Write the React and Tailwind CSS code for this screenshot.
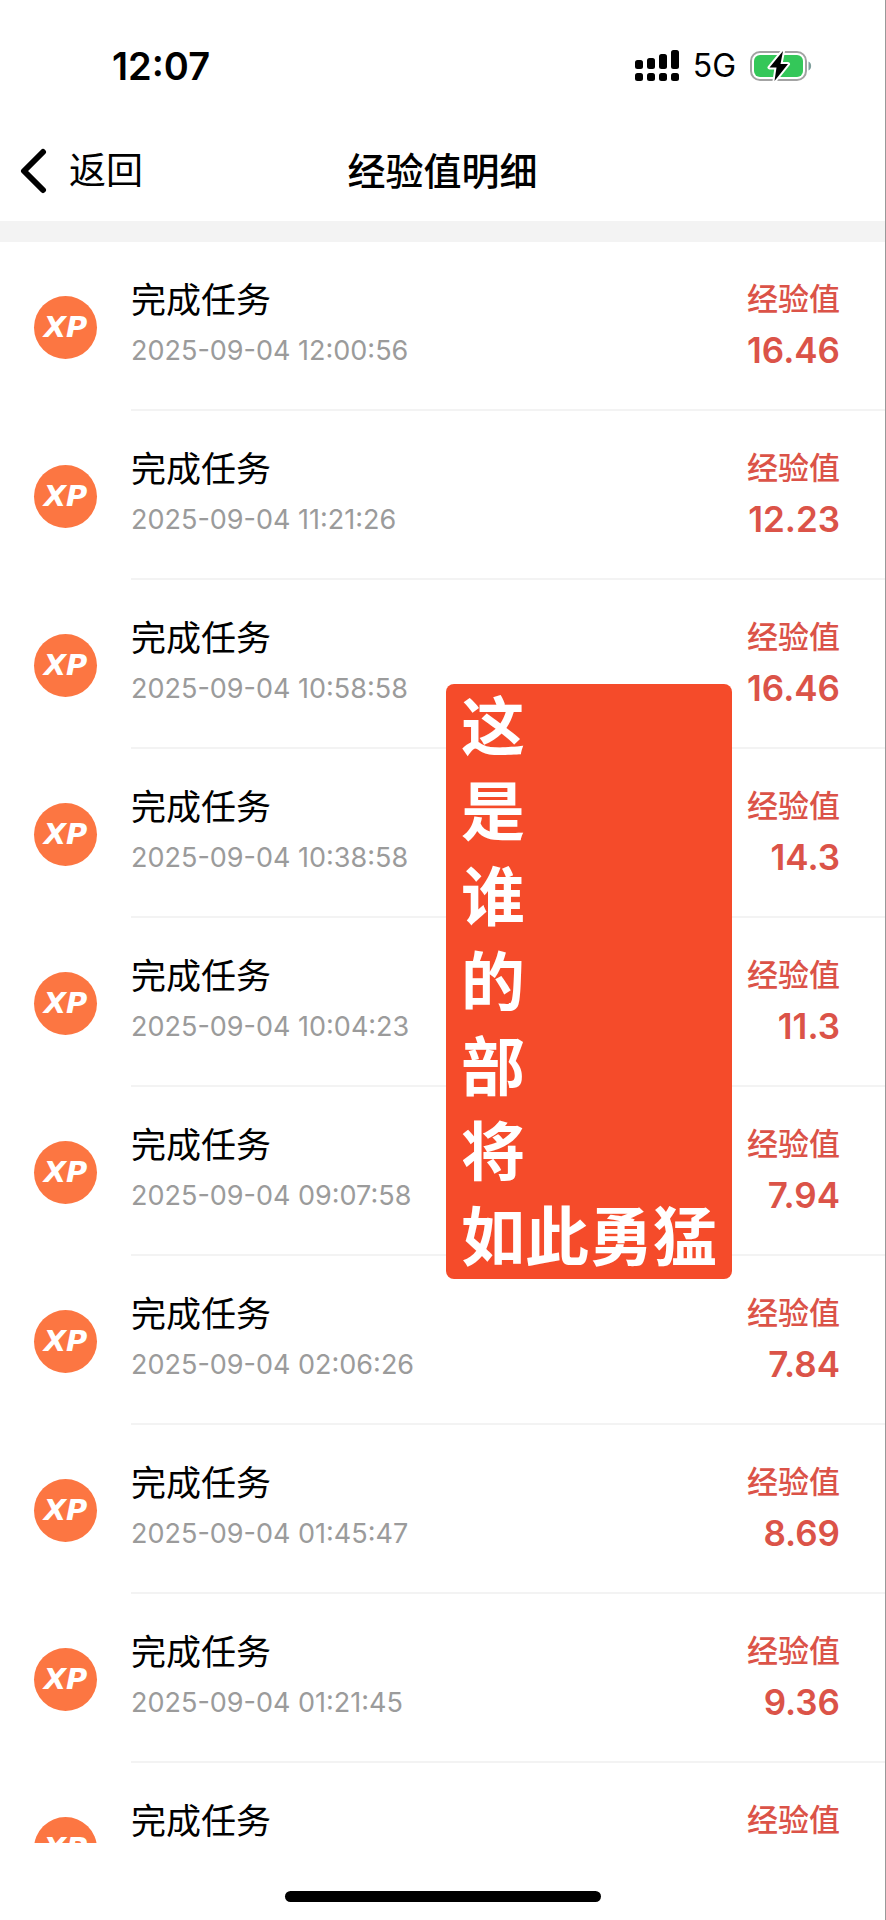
const records = [
    { time: "2025-09-04 12:00:56", value: "16.46" },
    { time: "2025-09-04 11:21:26", value: "12.23" },
    { time: "2025-09-04 10:58:58", value: "16.46" },
    { time: "2025-09-04 10:38:58", value: "14.3" },
    { time: "2025-09-04 10:04:23", value: "11.3" },
    { time: "2025-09-04 09:07:58", value: "7.94" },
    { time: "2025-09-04 02:06:26", value: "7.84" },
    { time: "2025-09-04 01:45:47", value: "8.69" },
    { time: "2025-09-04 01:21:45", value: "9.36" },
    { time: "", value: "" },
];

const captionLines = ["这", "是", "谁", "的", "部", "将", "如此勇猛"];

function SignalIcon() {
    return (
        <svg width="44" height="32" viewBox="0 0 44 32" fill="#000" aria-hidden="true">
            <rect x="0" y="10" width="8" height="9" rx="2.5" />
            <rect x="12" y="8" width="8" height="11" rx="2.5" />
            <rect x="24" y="4" width="8" height="15" rx="2.5" />
            <rect x="36" y="0" width="8" height="19" rx="2.5" />
            <rect x="0" y="23" width="8" height="8" rx="2.5" />
            <rect x="12" y="23" width="8" height="8" rx="2.5" />
            <rect x="24" y="23" width="8" height="8" rx="2.5" />
            <rect x="36" y="23" width="8" height="8" rx="2.5" />
        </svg>
    );
}

function BatteryIcon() {
    return (
        <svg width="62" height="34" viewBox="0 0 62 34" aria-hidden="true">
            <rect x="1" y="3" width="55" height="28" rx="9" fill="#fff" stroke="#a3a3a3" strokeWidth="2" />
            <rect x="4" y="6" width="49" height="22" rx="6" fill="#34c759" />
            <path d="M58.5 12.5 C62 14 62 20 58.5 21.5 Z" fill="#7f9f9c" />
            <path d="M33 2 L19.500 18.500 H26.500 L24.500 32 L38 15 H30.500 Z" fill="#000" stroke="#fff" strokeWidth="4" strokeLinejoin="round" paintOrder="stroke" />
        </svg>
    );
}

function StatusBar() {
    return (
        <div className="flex h-[120px] items-center justify-between pt-3 pr-[73px] pl-[112px]">
            <span className="text-[38px] leading-none font-semibold">12:07</span>
            <div className="flex items-center gap-[14px]">
                <SignalIcon />
                <span className="text-[32px] leading-none">5G</span>
                <BatteryIcon />
            </div>
        </div>
    );
}

function NavBar() {
    return (
        <header className="grid h-[101px] grid-cols-[1fr_auto_1fr] items-center">
            <button type="button" className="flex items-center gap-[20px] justify-self-start pl-[18px] text-[37px] leading-none">
                <svg width="31" height="46" viewBox="0 0 31 46" fill="none" aria-hidden="true">
                    <path d="M25 4 L6 23 L25 42" stroke="#000" strokeWidth="6" strokeLinecap="round" strokeLinejoin="round" />
                </svg>
                返回
            </button>
            <h1 className="text-[38px] leading-none font-medium">经验值明细</h1>
        </header>
    );
}

function RecordRow({ time, value }) {
    return (
        <li className="flex h-[169px] shrink-0 gap-[34px] pl-[34px]">
            <div className="mt-[54px] flex size-[63px] shrink-0 items-center justify-center rounded-full bg-[#fc7642] font-['DejaVu_Sans',sans-serif] text-[29px] leading-none font-bold text-white italic">
                XP
            </div>
            <div className="flex flex-1 justify-between border-b-2 border-[#f3f3f3] pt-[34px] pr-[45px]">
                <div>
                    <p className="text-[35px] leading-[48px]">完成任务</p>
                    <p className="text-[27px] leading-[54px] text-[#9b9b9b]">{time}</p>
                </div>
                <div className="text-right text-[#db5348]">
                    <p className="text-[31px] leading-[46px] font-medium">经验值</p>
                    <p className="text-[35px] leading-[56px] font-semibold">{value}</p>
                </div>
            </div>
        </li>
    );
}

function Caption() {
    return (
        <div className="absolute top-[442px] left-[446px] rounded-lg bg-[#f54927]/99 px-[15px] text-[64px] leading-[85px] font-bold text-white">
            {captionLines.map((line) => (
                <p key={line}>{line}</p>
            ))}
        </div>
    );
}

export default function App() {
    return (
        <div className="flex h-screen flex-col border-r border-[#999999] bg-white font-['Inter','Noto_Sans_CJK_SC',sans-serif] text-black">
            <StatusBar />
            <NavBar />
            <main className="relative min-h-0 flex-1 overflow-hidden border-t-[21px] border-[#f3f3f3]">
                <ul className="flex flex-col">
                    {records.map((record, index) => (
                        <RecordRow key={index} time={record.time} value={record.value} />
                    ))}
                </ul>
                <Caption />
            </main>
            <footer className="flex h-[77px] shrink-0 justify-center pt-12">
                <div className="h-[11px] w-[316px] rounded-full bg-black" />
            </footer>
        </div>
    );
}
